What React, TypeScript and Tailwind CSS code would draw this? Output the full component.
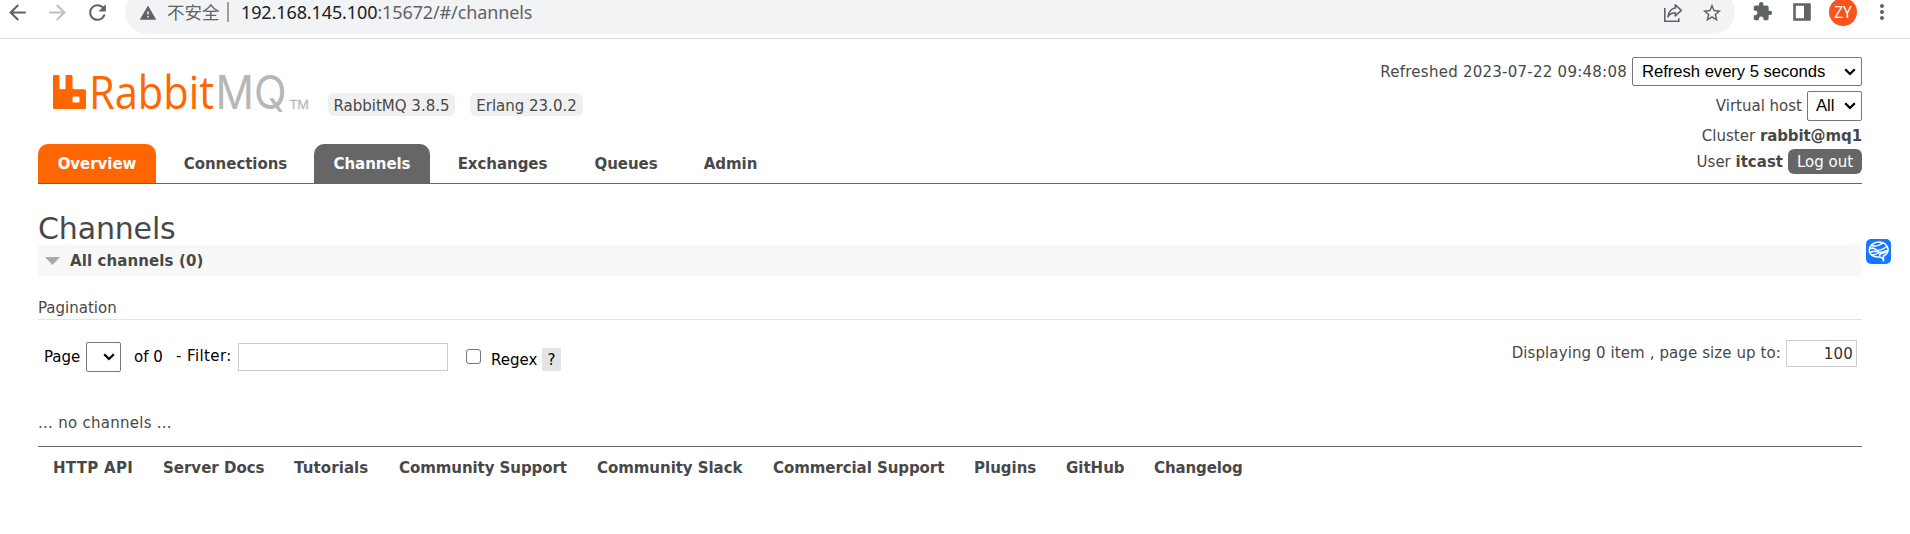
import { MdArrowBack, MdArrowForward, MdRefresh, MdWarning, MdStarBorder, MdExtension, MdMoreVert } from "react-icons/md";

const tabs = [
  { label: "Overview", cls: "w-[118px] bg-[#ff6600] text-white" },
  { label: "Connections", cls: "w-[142px] pl-[1px]" },
  { label: "Channels", cls: "w-[116px] bg-[#666] text-white" },
  { label: "Exchanges", cls: "w-[129px]" },
  { label: "Queues", cls: "w-[102px]" },
  { label: "Admin", cls: "w-[91px]" },
];

const footer = [
  { label: "HTTP API", cls: "w-[110px] tracking-[0.3px]" },
  { label: "Server Docs", cls: "w-[131px]" },
  { label: "Tutorials", cls: "w-[105px] tracking-[0.1px]" },
  { label: "Community Support", cls: "w-[198px] tracking-[-0.07px]" },
  { label: "Community Slack", cls: "w-[176px] tracking-[-0.05px]" },
  { label: "Commercial Support", cls: "w-[201px] tracking-[-0.07px]" },
  { label: "Plugins", cls: "w-[92px]" },
  { label: "GitHub", cls: "w-[88px]" },
  { label: "Changelog", cls: "w-[120px] tracking-[-0.1px]" },
];

function Chevron() {
  return (
    <svg width="12" height="8" viewBox="0 0 12 8" fill="none" className="shrink-0">
      <path d="M1.2 1.3 L6 6 L10.8 1.3" stroke="#000" strokeWidth="2.3" />
    </svg>
  );
}

function BrowserBar() {
  return (
    <div className="flex h-[39px] items-start overflow-hidden border-b border-[#dadce0] bg-white text-[#5f6368]">
      <div className="flex w-[125px] shrink-0 pl-[5px]">
        <MdArrowBack className="size-[25px]" />
        <MdArrowForward className="ml-[15px] size-[25px] text-[#bdc1c6]" />
        <MdRefresh className="ml-[15px] size-[25px]" />
      </div>
      <div className="-mt-[11px] flex h-[45px] w-[1610px] shrink-0 items-center rounded-full bg-[#f1f3f4] font-['Noto_Sans','Noto_Sans_CJK_SC',sans-serif]">
        <MdWarning className="mt-[2px] ml-[14px] size-[18px]" />
        <span className="ml-[10px] w-[52px] text-[17.5px] whitespace-nowrap">不安全</span>
        <span className="ml-[8px] h-[20px] w-[2px] bg-[#9aa0a6]" />
        <span className="ml-[12px] text-[18px] tracking-[-0.11px] whitespace-nowrap">
          <span className="text-[#202124]">192.168.145.100</span>:15672/#/channels
        </span>
        <svg width="20" height="20" viewBox="0 0 20 20" fill="none" stroke="currentColor" strokeWidth="1.6" className="mt-[2px] ml-auto">
          <path d="M1.800 5v13.200h14v-3" />
          <path d="M12.300 1.800 L18.300 7.300 L12.300 12.800 V9.800 Q7.500 9.800 5 13.800 Q6 6 12.300 5z" strokeLinejoin="round" />
        </svg>
        <MdStarBorder className="mt-[2px] mr-[12px] ml-[18px] size-[22px]" />
      </div>
      <MdExtension className="mt-[1px] ml-[17px] size-[21px]" />
      <svg width="18" height="18" viewBox="0 0 18 18" className="mt-[3px] ml-[20px]">
        <path d="M1.5 1.5h15v15h-15z" fill="none" stroke="currentColor" strokeWidth="2.6" />
        <path d="M11 1h6v16h-6z" fill="currentColor" />
      </svg>
      <div className="-mt-[2px] ml-[18px] flex size-[28px] items-center justify-center rounded-full bg-[#fa541c] font-['Open_Sans',sans-serif] text-[15.5px] text-white">ZY</div>
      <MdMoreVert className="ml-[13px] size-[24px]" />
    </div>
  );
}

function Logo() {
  return (
    <svg width="262" height="54" viewBox="0 0 262 54" className="block overflow-visible">
      <path
        fill="#ff6600"
        fillRule="evenodd"
        d="M1 5h4.500q1 0 1 1v12q0 1.300 1.300 1.300h3.400q1.300 0 1.300-1.300v-12q0-1 1-1h5q1 0 1 1v12q0 1.300 1.300 1.300h10.700q1.500 0 1.500 1.500v17.200q0 1-1 1h-31q-1 0-1-1v-32q0-1 1-1z M20.500 26.500q-1 0-1 1v4q0 1 1 1h5q1 0 1-1v-4q0-1-1-1z"
      />
      <text x="36" y="39" fontSize="46" textLength="125" lengthAdjust="spacingAndGlyphs" fill="#ff6600" className="font-['Open_Sans',sans-serif]">Rabbit</text>
      <text x="162.500" y="39" fontSize="46.700" textLength="71" lengthAdjust="spacingAndGlyphs" fill="#b7b7b7" className="font-['Inter',sans-serif] font-normal">MQ</text>
      <text x="237" y="39" fontSize="12" textLength="19" lengthAdjust="spacingAndGlyphs" fill="#b7b7b7" stroke="#b7b7b7" strokeWidth="0.3" className="font-['Open_Sans',sans-serif]">TM</text>
    </svg>
  );
}

function StatusPanel() {
  return (
    <div className="flex flex-col items-end pt-[18px] whitespace-nowrap">
      <div className="flex h-[29px] items-center">
        <span className="mr-[5px] tracking-[0.25px]">Refreshed 2023-07-22 09:48:08</span>
        <div className="flex h-[29px] w-[230px] items-center justify-between rounded-[2px] border border-[#767676] pr-[5px] pl-[9px] font-['Liberation_Sans',sans-serif] text-[16.67px] tracking-[-0.04px] text-black">
          Refresh every 5 seconds
          <Chevron />
        </div>
      </div>
      <div className="mt-[5px] flex h-[30px] items-center">
        <span className="mr-[5px]">Virtual host</span>
        <div className="flex h-[30px] w-[55px] items-center justify-between rounded-[2px] border border-[#767676] pr-[5px] pl-[8px] font-['Liberation_Sans',sans-serif] text-[16.67px] text-black">
          All
          <Chevron />
        </div>
      </div>
      <div className="mt-[4px] h-[22px] leading-[22px]">
        Cluster <b className="tracking-[-0.1px]">rabbit@mq1</b>
      </div>
      <div className="mt-[2px] flex h-[25px] items-center">
        <span className="mr-[5px]">User <b>itcast</b></span>
        <button className="h-[25px] w-[74px] rounded-[6px] bg-[#666] pt-[1px] text-white">Log out</button>
      </div>
    </div>
  );
}

export default function App() {
  return (
    <div className="h-[534px] overflow-hidden bg-white font-['DejaVu_Sans',sans-serif] text-[15px] leading-[20px] text-[#484848]">
      <BrowserBar />
      <div className="mx-[38px] w-[1824px]">
        <header className="flex h-[145px] justify-between border-b border-[#666]">
          <div className="flex flex-col">
            <div className="flex h-[105px] pl-[15px] pt-[31px] whitespace-nowrap">
              <Logo />
              <span className="mt-[23px] ml-[13px] flex h-[23px] w-[127px] items-center justify-center rounded-[6px] bg-[#f0f0f0] pt-[2px]">RabbitMQ 3.8.5</span>
              <span className="mt-[23px] ml-[15px] flex h-[23px] w-[113px] items-center justify-center rounded-[6px] bg-[#f0f0f0] pt-[2px]">Erlang 23.0.2</span>
            </div>
            <nav className="flex h-[39px] gap-[8px] font-bold tracking-[-0.05px]">
              {tabs.map((t) => (
                <a key={t.label} className={`flex h-[39px] items-center justify-center rounded-t-[10px] ${t.cls}`}>{t.label}</a>
              ))}
            </nav>
          </div>
          <StatusPanel />
        </header>

        <h1 className="mt-[27px] h-[34px] text-[30px] leading-[36px] tracking-[-0.15px]">Channels</h1>
        <div className="relative flex h-[31px] items-center bg-[#f8f8f8] pl-[7px] font-bold">
          <svg width="15" height="8" viewBox="0 0 15 8"><path d="M0 0h15L7.500 8z" fill="#aaa" /></svg>
          <span className="ml-[10px] tracking-[0.1px]">All channels (0)</span>
          <svg width="25" height="25" viewBox="0 0 25 25" className="absolute top-[-6px] left-[1828px]">
            <rect width="25" height="25" rx="5" fill="#1677ff" />
            <path d="M17.500 22.500q0-4-4-4.500q-8 .500-10-5q-1-5.500 4-8.500q6-3 11 0q5 4 3 9q-1 2-4 3.500v5M6 6.500q5 2 11-3M4 10q3-2 6 .500t11-3M4 13.500q5-2 8-.500t9-1.500M6 16q6-1 9-3M14 17q-1-2 2-2.500t5-2" fill="none" stroke="#fff" strokeWidth="1.500" />
          </svg>
        </div>
        <h3 className="mt-[21px] flex h-[23px] items-center border-b border-[#e4e4e4]">Pagination</h3>
        <div className="flex h-[92px] items-start pl-[6px] whitespace-nowrap text-black">
          <span className="mt-[27px] w-[42px]">Page</span>
          <div className="mt-[22px] flex h-[30px] w-[35px] items-center justify-end rounded-[2px] border border-[#767676] pr-[5px]">
            <Chevron />
          </div>
          <span className="mt-[27px] ml-[13px] w-[42px]">of 0</span>
          <span className="mt-[26px] w-[62px] tracking-[0.4px]">- Filter:</span>
          <div className="mt-[23px] h-[28px] w-[210px] border border-[#ccc]" />
          <div className="mt-[29px] ml-[18px] size-[15px] rounded-[3px] border border-[#767676]" />
          <span className="mt-[30px] ml-[10px] w-[51px]">Regex</span>
          <span className="mt-[28px] flex h-[23px] w-[19px] items-center justify-center bg-[#e4e4e4]">?</span>
          <span className="mt-[23px] ml-auto tracking-[0.1px] text-[#484848]">Displaying 0 item , page size up to:</span>
          <div className="mt-[20px] mr-[5px] ml-[5px] flex h-[27px] w-[71px] items-center justify-end border border-[#ccc] pr-[3px] tracking-[0.2px] text-[#333]">100</div>
        </div>
        <p className="mt-[1px] h-[33px] leading-[20px] tracking-[0.27px]">... no channels ...</p>
        <footer className="flex border-t border-[#666] pt-[11px] pl-[15px] font-bold whitespace-nowrap">
          {footer.map((f) => (
            <a key={f.label} className={`shrink-0 ${f.cls}`}>{f.label}</a>
          ))}
        </footer>
      </div>
    </div>
  );
}
